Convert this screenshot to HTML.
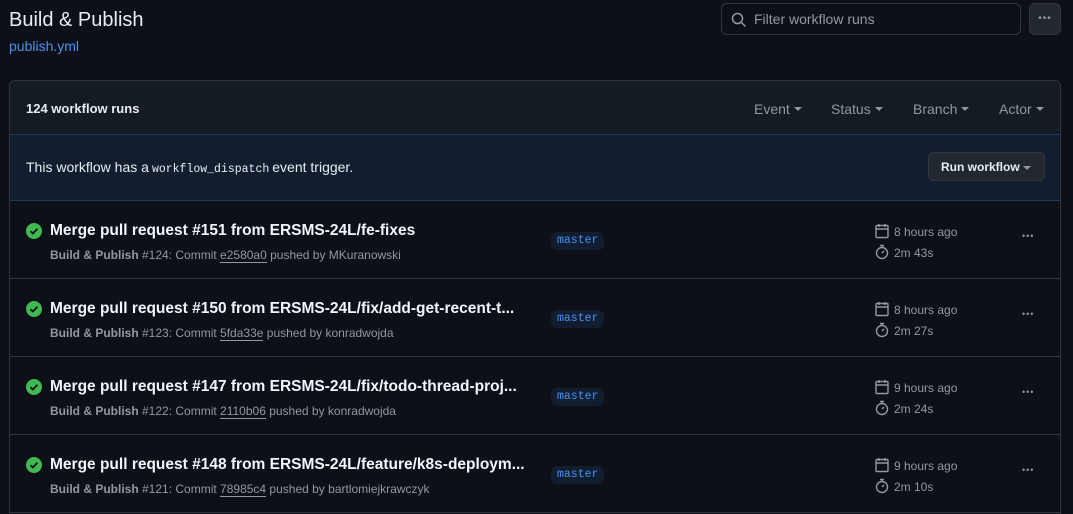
<!DOCTYPE html>
<html style="width:1073px;height:514px;overflow:hidden"><head><style>
*{box-sizing:border-box;margin:0;padding:0}
body{width:1073px;height:514px;overflow:hidden;background:#0d1117;font-family:"Liberation Sans",sans-serif;color:#e6edf3;position:relative}
.abs{position:absolute}
.title{left:9px;top:9px;font-size:20px;color:#e6edf3}
.yml{left:9px;top:38px;font-size:14px;color:#4493f8}
.search{left:721px;top:3px;width:300px;height:32px;border:1px solid #30363d;border-radius:6px;background:#0d1117}
.search span{position:absolute;left:32px;top:7px;font-size:14px;color:#9198a1}
.dotsb{left:1029px;top:3px;width:32px;height:32px;border:1px solid #30363d;border-radius:6px;background:#212830;color:#9198a1;text-align:center;font-size:10px;line-height:30px;letter-spacing:1px}
.box{left:9px;top:80px;width:1052px;height:450px;border:1px solid #30363d;border-radius:6px;overflow:hidden}
.hdr{position:absolute;left:0;top:0;width:100%;height:54px;background:#151b23;border-bottom:1px solid #1f3a5f}
.hdr b{position:absolute;left:16px;top:20px;font-size:13px}
.flt{position:absolute;top:20px;font-size:14px;color:#9198a1}
.flt:after{content:"";display:inline-block;margin-left:4px;vertical-align:3px;border:4px solid transparent;border-top-color:#9198a1;border-bottom:0}
.ban{position:absolute;left:0;top:54px;width:100%;height:66px;background:#121d2f;border-bottom:1px solid #1f3a5f}
.ban .t{position:absolute;left:16px;top:24px;font-size:14px}
.ban code{font-family:"Liberation Mono",monospace;font-size:11.5px;margin:0 3px}
.btn{position:absolute;left:918px;top:17px;width:117px;height:29px;border:1px solid #30363d;border-radius:6px;background:#212830;font-size:12px;font-weight:bold;padding:7px 0 0 12px}
.btn:after{content:"";position:absolute;right:13px;top:13px;border:4px solid transparent;border-top-color:#9198a1;border-bottom:0}
.row{position:absolute;left:0;width:100%;height:78px;border-bottom:1px solid #30363d}
.row .ck{position:absolute;left:16px;top:22px}
.row .h{position:absolute;left:40px;top:21px;font-size:15.5px;font-weight:bold;color:#f0f6fc}
.row .s{position:absolute;left:40px;top:47px;font-size:12px;color:#9198a1}
.row .s b{color:#9198a1}
.row .s u{text-decoration:none;border-bottom:1px solid #9198a1}
.lbl{position:absolute;left:541px;top:31px;height:18px;padding:2px 6px;border-radius:6px;background:#121d2f;color:#4493f8;font-family:"Liberation Mono",monospace;font-size:11.5px}
.tm{position:absolute;left:864px;font-size:12px;color:#9198a1}
.rd{position:absolute;left:1012px;top:30px;color:#9198a1;font-size:9px;letter-spacing:1px}
</style></head><body>
<div class="abs title">Build &amp; Publish</div>
<div class="abs yml">publish.yml</div>
<div class="abs search"><svg class="abs" style="left:9px;top:8px" width="16" height="16" viewBox="0 0 16 16"><circle cx="6.5" cy="6.5" r="5" fill="none" stroke="#9198a1" stroke-width="1.5"/><path d="M10 10l4.5 4.5" stroke="#9198a1" stroke-width="1.5"/></svg><span>Filter workflow runs</span></div>
<div class="abs dotsb">•••</div>
<div class="abs box">
<div class="hdr"><b>124 workflow runs</b>
<span class="flt" style="left:744px">Event</span><span class="flt" style="left:821px">Status</span><span class="flt" style="left:903px">Branch</span><span class="flt" style="left:989px">Actor</span></div>
<div class="ban"><div class="t">This workflow has a<code>workflow_dispatch</code>event trigger.</div><div class="btn">Run workflow</div></div>

<div class="row" style="top:120px">
<svg class="ck" width="16" height="16" viewBox="0 0 16 16"><circle cx="8" cy="8" r="8" fill="#3fb950"/><path d="M4.5 8.2l2.3 2.3 4.7-4.7" stroke="#0d1117" stroke-width="1.8" fill="none"/></svg>
<div class="h">Merge pull request #151 from ERSMS-24L/fe-fixes</div>
<div class="s"><b>Build &amp; Publish</b> #124: Commit <u>e2580a0</u> pushed by MKuranowski</div>
<div class="lbl">master</div>
<svg class="abs" style="left:865px;top:22px" width="14" height="16" viewBox="0 0 14 16"><rect x="1" y="2.5" width="12" height="12" rx="1" fill="none" stroke="#9198a1" stroke-width="1.4"/><path d="M1 6h12M4 1v3M10 1v3" stroke="#9198a1" stroke-width="1.4"/></svg>
<svg class="abs" style="left:865px;top:43px" width="14" height="16" viewBox="0 0 14 16"><circle cx="7" cy="9" r="5.5" fill="none" stroke="#9198a1" stroke-width="1.4"/><path d="M5 1.5h4M7 2v2M7 9l2-2" stroke="#9198a1" stroke-width="1.4"/></svg>
<div class="tm" style="left:884px;top:24px">8 hours ago</div><div class="tm" style="left:884px;top:45px">2m 43s</div>
<div class="rd">•••</div></div>

<div class="row" style="top:198px">
<svg class="ck" width="16" height="16" viewBox="0 0 16 16"><circle cx="8" cy="8" r="8" fill="#3fb950"/><path d="M4.5 8.2l2.3 2.3 4.7-4.7" stroke="#0d1117" stroke-width="1.8" fill="none"/></svg>
<div class="h">Merge pull request #150 from ERSMS-24L/fix/add-get-recent-t...</div>
<div class="s"><b>Build &amp; Publish</b> #123: Commit <u>5fda33e</u> pushed by konradwojda</div>
<div class="lbl">master</div>
<svg class="abs" style="left:865px;top:22px" width="14" height="16" viewBox="0 0 14 16"><rect x="1" y="2.5" width="12" height="12" rx="1" fill="none" stroke="#9198a1" stroke-width="1.4"/><path d="M1 6h12M4 1v3M10 1v3" stroke="#9198a1" stroke-width="1.4"/></svg>
<svg class="abs" style="left:865px;top:43px" width="14" height="16" viewBox="0 0 14 16"><circle cx="7" cy="9" r="5.5" fill="none" stroke="#9198a1" stroke-width="1.4"/><path d="M5 1.5h4M7 2v2M7 9l2-2" stroke="#9198a1" stroke-width="1.4"/></svg>
<div class="tm" style="left:884px;top:24px">8 hours ago</div><div class="tm" style="left:884px;top:45px">2m 27s</div>
<div class="rd">•••</div></div>

<div class="row" style="top:276px">
<svg class="ck" width="16" height="16" viewBox="0 0 16 16"><circle cx="8" cy="8" r="8" fill="#3fb950"/><path d="M4.5 8.2l2.3 2.3 4.7-4.7" stroke="#0d1117" stroke-width="1.8" fill="none"/></svg>
<div class="h">Merge pull request #147 from ERSMS-24L/fix/todo-thread-proj...</div>
<div class="s"><b>Build &amp; Publish</b> #122: Commit <u>2110b06</u> pushed by konradwojda</div>
<div class="lbl">master</div>
<svg class="abs" style="left:865px;top:22px" width="14" height="16" viewBox="0 0 14 16"><rect x="1" y="2.5" width="12" height="12" rx="1" fill="none" stroke="#9198a1" stroke-width="1.4"/><path d="M1 6h12M4 1v3M10 1v3" stroke="#9198a1" stroke-width="1.4"/></svg>
<svg class="abs" style="left:865px;top:43px" width="14" height="16" viewBox="0 0 14 16"><circle cx="7" cy="9" r="5.5" fill="none" stroke="#9198a1" stroke-width="1.4"/><path d="M5 1.5h4M7 2v2M7 9l2-2" stroke="#9198a1" stroke-width="1.4"/></svg>
<div class="tm" style="left:884px;top:24px">9 hours ago</div><div class="tm" style="left:884px;top:45px">2m 24s</div>
<div class="rd">•••</div></div>

<div class="row" style="top:354px">
<svg class="ck" width="16" height="16" viewBox="0 0 16 16"><circle cx="8" cy="8" r="8" fill="#3fb950"/><path d="M4.5 8.2l2.3 2.3 4.7-4.7" stroke="#0d1117" stroke-width="1.8" fill="none"/></svg>
<div class="h">Merge pull request #148 from ERSMS-24L/feature/k8s-deploym...</div>
<div class="s"><b>Build &amp; Publish</b> #121: Commit <u>78985c4</u> pushed by bartlomiejkrawczyk</div>
<div class="lbl">master</div>
<svg class="abs" style="left:865px;top:22px" width="14" height="16" viewBox="0 0 14 16"><rect x="1" y="2.5" width="12" height="12" rx="1" fill="none" stroke="#9198a1" stroke-width="1.4"/><path d="M1 6h12M4 1v3M10 1v3" stroke="#9198a1" stroke-width="1.4"/></svg>
<svg class="abs" style="left:865px;top:43px" width="14" height="16" viewBox="0 0 14 16"><circle cx="7" cy="9" r="5.5" fill="none" stroke="#9198a1" stroke-width="1.4"/><path d="M5 1.5h4M7 2v2M7 9l2-2" stroke="#9198a1" stroke-width="1.4"/></svg>
<div class="tm" style="left:884px;top:24px">9 hours ago</div><div class="tm" style="left:884px;top:45px">2m 10s</div>
<div class="rd">•••</div></div>
</div>
</body></html>
